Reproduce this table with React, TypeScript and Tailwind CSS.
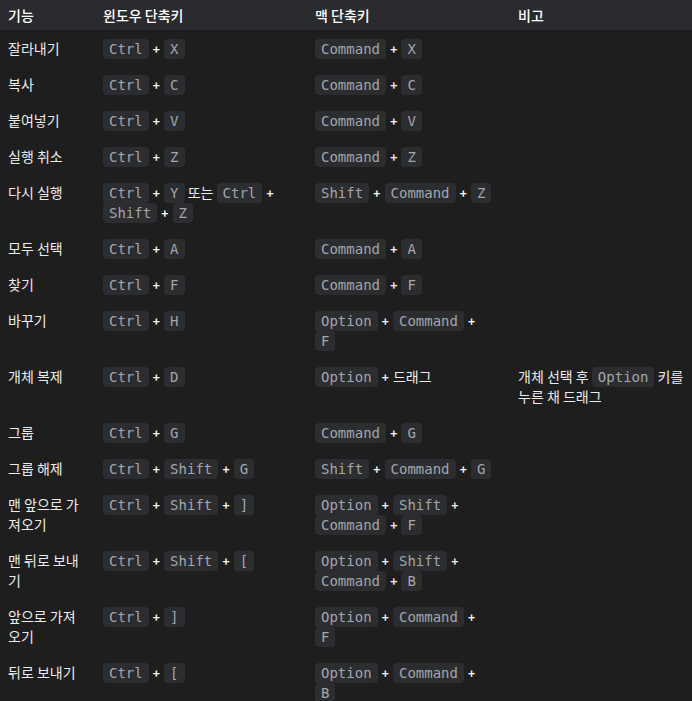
import React from 'react';

type Part = string;

// 'k:' prefix = key cap, '+' = plus sign, else plain text
const rows: { name: string; win: Part[]; mac: Part[]; note?: Part[] }[] = [
  { name: '잘라내기', win: ['k:Ctrl', '+', 'k:X'], mac: ['k:Command', '+', 'k:X'] },
  { name: '복사', win: ['k:Ctrl', '+', 'k:C'], mac: ['k:Command', '+', 'k:C'] },
  { name: '붙여넣기', win: ['k:Ctrl', '+', 'k:V'], mac: ['k:Command', '+', 'k:V'] },
  { name: '실행 취소', win: ['k:Ctrl', '+', 'k:Z'], mac: ['k:Command', '+', 'k:Z'] },
  {
    name: '다시 실행',
    win: ['k:Ctrl', '+', 'k:Y', '또는', 'k:Ctrl', '+', 'k:Shift', '+', 'k:Z'],
    mac: ['k:Shift', '+', 'k:Command', '+', 'k:Z'],
  },
  { name: '모두 선택', win: ['k:Ctrl', '+', 'k:A'], mac: ['k:Command', '+', 'k:A'] },
  { name: '찾기', win: ['k:Ctrl', '+', 'k:F'], mac: ['k:Command', '+', 'k:F'] },
  { name: '바꾸기', win: ['k:Ctrl', '+', 'k:H'], mac: ['k:Option', '+', 'k:Command', '+', 'k:F'] },
  {
    name: '개체 복제',
    win: ['k:Ctrl', '+', 'k:D'],
    mac: ['k:Option', '+', '드래그'],
    note: ['개체', '선택', '후', 'k:Option', '키를', '누른', '채', '드래그'],
  },
  { name: '그룹', win: ['k:Ctrl', '+', 'k:G'], mac: ['k:Command', '+', 'k:G'] },
  { name: '그룹 해제', win: ['k:Ctrl', '+', 'k:Shift', '+', 'k:G'], mac: ['k:Shift', '+', 'k:Command', '+', 'k:G'] },
  { name: '맨 앞으로 가져오기', win: ['k:Ctrl', '+', 'k:Shift', '+', 'k:]'], mac: ['k:Option', '+', 'k:Shift', '+', 'k:Command', '+', 'k:F'] },
  { name: '맨 뒤로 보내기', win: ['k:Ctrl', '+', 'k:Shift', '+', 'k:['], mac: ['k:Option', '+', 'k:Shift', '+', 'k:Command', '+', 'k:B'] },
  { name: '앞으로 가져오기', win: ['k:Ctrl', '+', 'k:]'], mac: ['k:Option', '+', 'k:Command', '+', 'k:F'] },
  { name: '뒤로 보내기', win: ['k:Ctrl', '+', 'k:['], mac: ['k:Option', '+', 'k:Command', '+', 'k:B'] },
];

const Keys = ({ parts }: { parts: Part[] }) => (
  <>
    {parts.map((p, i) => {
      const sep = i < parts.length - 1 ? ' ' : '';
      if (p.startsWith('k:')) {
        return (
          <React.Fragment key={i}>
            <kbd className="rounded-[4px] bg-[#2c2d30] px-[6px] py-[2px] font-['DejaVu_Sans_Mono',monospace] text-[14px] leading-none text-[#a3a6ac]">
              {p.slice(2)}
            </kbd>
            {sep}
          </React.Fragment>
        );
      }
      if (p === '+') {
        return (
          <React.Fragment key={i}>
            <span className="mx-[1px] text-[12px] font-bold leading-none text-white">+</span>
            {sep}
          </React.Fragment>
        );
      }
      return (
        <React.Fragment key={i}>
          {p}
          {sep}
        </React.Fragment>
      );
    })}
  </>
);

export default function App() {
  return (
    <div className="min-h-[701px] w-[692px] bg-[#1e1e1f] font-['Noto_Sans_CJK_KR','Noto_Sans',sans-serif] text-[14px] leading-5 text-[#ececec]">
      <table className="w-full table-fixed border-collapse text-left">
        <colgroup>
          <col className="w-[95px]" />
          <col className="w-[212px]" />
          <col className="w-[203px]" />
          <col className="w-[182px]" />
        </colgroup>
        <thead>
          <tr className="bg-[#2a2b2e]">
            <th className="px-2 py-[5px] font-medium text-white">기능</th>
            <th className="px-2 py-[5px] font-medium text-white">윈도우 단축키</th>
            <th className="px-2 py-[5px] font-medium text-white">맥 단축키</th>
            <th className="px-2 py-[5px] font-medium text-white">비고</th>
          </tr>
        </thead>
        <tbody>
          {rows.map(r => (
            <tr key={r.name}>
              <td className="px-2 py-2 align-top">{r.name}</td>
              <td className="px-2 py-2 align-top"><Keys parts={r.win} /></td>
              <td className="py-2 pl-2 pr-[18px] align-top"><Keys parts={r.mac} /></td>
              <td className="px-2 py-2 align-top">{r.note && <Keys parts={r.note} />}</td>
            </tr>
          ))}
        </tbody>
      </table>
    </div>
  );
}
